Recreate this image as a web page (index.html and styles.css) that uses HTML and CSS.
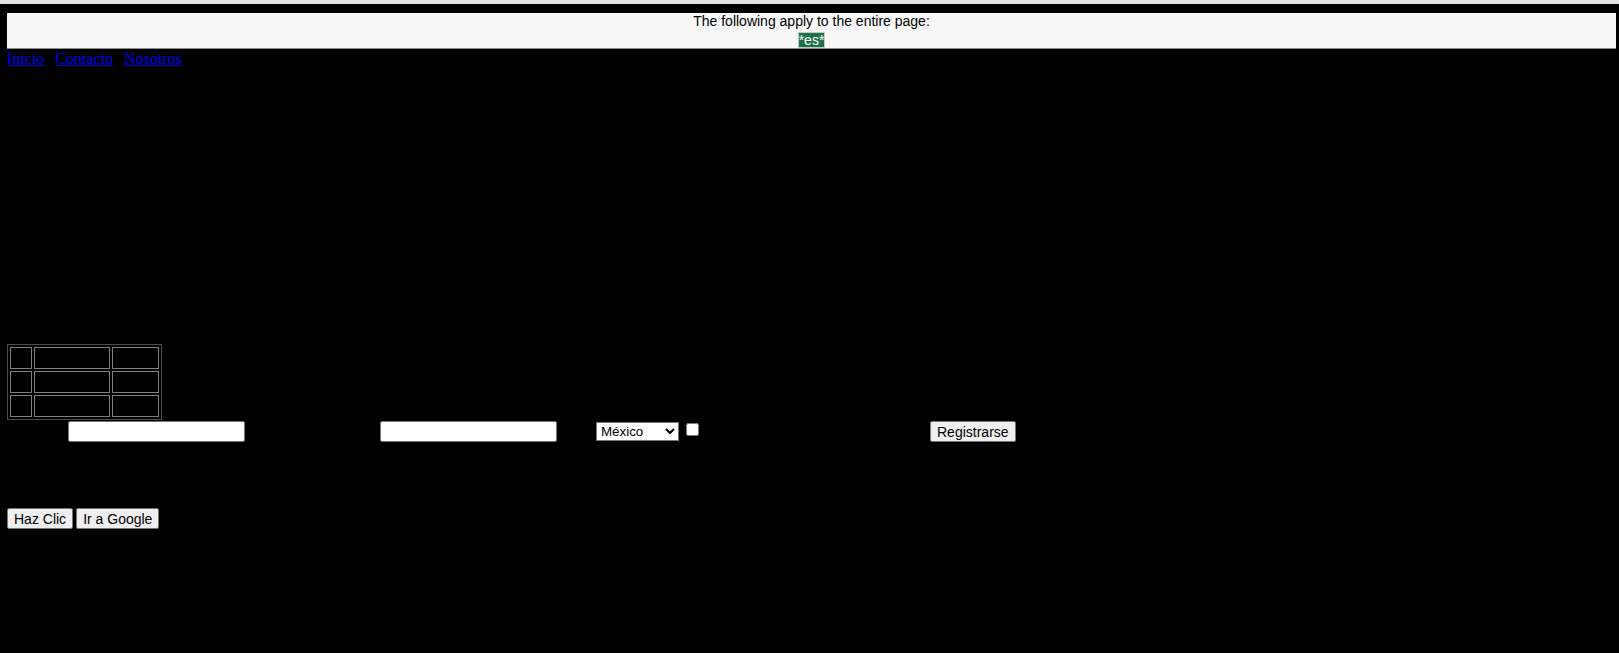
FILE: index.html
```html
<!DOCTYPE html>
<html lang="es">
<head>
<meta charset="utf-8">
<title>Página</title>
<link rel="stylesheet" href="styles.css">
</head>
<body>
<div class="topstrip"></div>
<div class="page">
  <div class="langbox">
    <div class="langtitle">The following apply to the entire page:</div>
    <span class="badge">*es*</span>
  </div>
  <nav class="nav">
    <a href="#">Inicio</a>
    <a href="#">Contacto</a>
    <a href="#">Nosotros</a>
  </nav>
  <table class="grid">
    <tr><td class="c1"></td><td class="c2"></td><td class="c3"></td></tr>
    <tr><td class="c1"></td><td class="c2"></td><td class="c3"></td></tr>
    <tr><td class="c1"></td><td class="c2"></td><td class="c3"></td></tr>
  </table>
  <form class="form" onsubmit="return false">
    <input class="field f1" type="text">
    <input class="field f2" type="text">
    <select class="sel"><option>México</option></select>
    <input class="chk" type="checkbox">
    <button class="btn reg" type="button">Registrarse</button>
  </form>
  <div class="actions">
    <button class="btn" type="button">Haz Clic</button>
    <button class="btn" type="button">Ir a Google</button>
  </div>
</div>
</body>
</html>
```

FILE: styles.css
```css
html, body {
  margin: 0;
  padding: 0;
  background: #000;
}
body {
  font-family: "Liberation Serif", "Times New Roman", serif;
  font-size: 16px;
  min-height: 653px;
}
.topstrip {
  height: 4px;
  background: #e2e2e2;
}
.page {
  padding: 9px 3px 0 7px;
}
.langbox {
  background: #f8f8f8;
  border-bottom: 1px solid #8c8c8c;
  height: 35px;
  text-align: center;
  font-family: "Liberation Sans", Arial, sans-serif;
  font-size: 14px;
  color: #000;
}
.langtitle {
  line-height: 17px;
  height: 17px;
}
.badge {
  display: inline-block;
  margin-top: 2px;
  background: #1c7246;
  color: #fff;
  border: 1px solid #c9c9c9;
  line-height: 14px;
  padding: 0;
}
.nav {
  display: flex;
  gap: 11px;
  line-height: 18px;
  height: 18px;
  padding-top: 1px;
}
.nav a {
  color: #0000ee;
  text-decoration: underline;
}
.grid {
  margin-top: 276px;
  border-collapse: separate;
  border-spacing: 2px;
  border: 1px solid #4d4d4d;
}
.grid td {
  padding: 0;
  height: 20px;
  border: 1px solid #808080;
}
.grid .c1 { width: 20px; }
.grid .c2 { width: 74px; }
.grid .c3 { width: 45px; }
.form {
  display: flex;
  align-items: flex-start;
  margin: 0;
  padding-top: 1px;
  height: 22px;
}
.field {
  box-sizing: border-box;
  width: 177px;
  height: 21px;
  border: 1px solid #767676;
  border-radius: 2px;
  background: #fff;
  padding: 1px 2px;
  margin: 0;
  font-family: "Liberation Sans", Arial, sans-serif;
  font-size: 13.333px;
}
.f1 { margin-left: 61px; }
.f2 { margin-left: 135px; }
.sel {
  box-sizing: border-box;
  margin: 1px 0 0 39px;
  width: 83px;
  height: 19px;
  font-family: "Liberation Sans", Arial, sans-serif;
  font-size: 13.333px;
  color: #000;
  background: #fff;
  border: 1px solid #767676;
  border-radius: 0;
}
.chk {
  margin: 2px 0 0 7px;
  width: 13px;
  height: 13px;
}
.btn {
  box-sizing: border-box;
  height: 21px;
  margin: 0;
  padding: 1px 6px;
  background: #efefef;
  border: 1px solid #767676;
  border-radius: 2px;
  color: #000;
  font-family: "Liberation Sans", Arial, sans-serif;
  font-size: 14px;
}
.reg { margin-left: 231px; }
.actions {
  display: flex;
  gap: 3px;
  margin-top: 65px;
}
```
